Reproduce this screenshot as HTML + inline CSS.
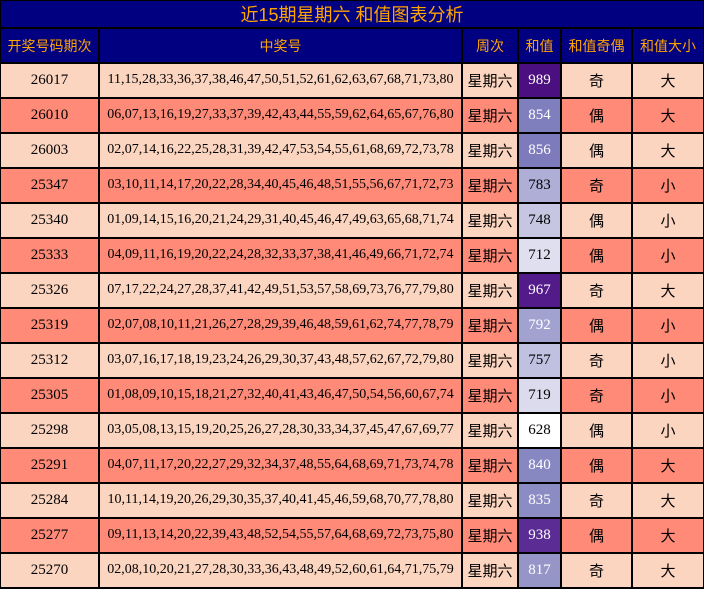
<!DOCTYPE html>
<html><head><meta charset="utf-8"><style>
body{margin:0;width:704px;height:589px;background:#000;position:relative;overflow:hidden;font-family:"Liberation Serif","Noto Sans CJK SC",serif;}
.c{position:absolute;display:flex;align-items:center;justify-content:center;box-sizing:border-box;white-space:nowrap;}
.t{background:#000080;color:#ffa500;font-family:"Liberation Sans","Noto Sans CJK SC",sans-serif;font-size:14px;}
.cj{font-family:"Noto Sans CJK SC",sans-serif;font-size:15px;color:#000;}
.n{font-size:15px;color:#000;padding-bottom:1px;}
.w{font-size:14px;color:#000;padding-bottom:1px;}
</style></head><body>
<div class="c t" style="left:1px;top:1px;width:702px;height:26px;font-size:18px;">近15期星期六 和值图表分析</div>
<div id="h"></div>
<script>
var X=[0,99,462,518,561,632,703];
var H=["开奖号码期次","中奖号","周次","和值","和值奇偶","和值大小"];
var D=[
["26017","11,15,28,33,36,37,38,46,47,50,51,52,61,62,63,67,68,71,73,80",989,"奇","大","#4b0f80"],
["26010","06,07,13,16,19,27,33,37,39,42,43,44,55,59,62,64,65,67,76,80",854,"偶","大","#7f7fbd"],
["26003","02,07,14,16,22,25,28,31,39,42,47,53,54,55,61,68,69,72,73,78",856,"偶","大","#7d7bbb"],
["25347","03,10,11,14,17,20,22,28,34,40,45,46,48,51,55,56,67,71,72,73",783,"奇","小","#aeaed6"],
["25340","01,09,14,15,16,20,21,24,29,31,40,45,46,47,49,63,65,68,71,74",748,"偶","小","#c6c6e3"],
["25333","04,09,11,16,19,20,22,24,28,32,33,37,38,41,46,49,66,71,72,74",712,"偶","小","#dfdfef"],
["25326","07,17,22,24,27,28,37,41,42,49,51,53,57,58,69,73,76,77,79,80",967,"奇","大","#531a8a"],
["25319","02,07,08,10,11,21,26,27,28,29,39,46,48,59,61,62,74,77,78,79",792,"偶","小","#a2a2d0"],
["25312","03,07,16,17,18,19,23,24,26,29,30,37,43,48,57,62,67,72,79,80",757,"奇","小","#c0c0e0"],
["25305","01,08,09,10,15,18,21,27,32,40,41,43,46,47,50,54,56,60,67,74",719,"奇","小","#dbdbed"],
["25298","03,05,08,13,15,19,20,25,26,27,28,30,33,34,37,45,47,67,69,77",628,"偶","小","#ffffff"],
["25291","04,07,11,17,20,22,27,29,32,34,37,48,55,64,68,69,71,73,74,78",840,"偶","大","#8787c2"],
["25284","10,11,14,19,20,26,29,30,35,37,40,41,45,46,59,68,70,77,78,80",835,"奇","大","#8c8cc4"],
["25277","09,11,13,14,20,22,39,43,48,52,54,55,57,64,68,69,72,73,75,80",938,"偶","大","#5b2d94"],
["25270","02,08,10,20,21,27,28,30,33,36,43,48,49,52,60,61,64,71,75,79",817,"奇","大","#9595c8"]];
var s="";
function cell(i,y,h,bg,cls,txt,col){var l=X[i]+1,w=X[i+1]-X[i]-2;if(i==0){l=1;w=97;}if(i==5)w=70;
s+='<div class="c '+cls+'" style="left:'+l+'px;top:'+y+'px;width:'+w+'px;height:'+h+'px;background:'+bg+';'+(col?'color:'+col+';':'')+'">'+txt+'</div>';}
for(var i=0;i<6;i++)cell(i,29,33,"#000080","t",H[i],null);
for(var r=0;r<15;r++){var y=64+r*35,bg=r%2?"#ff8a78":"#fcd5c0",d=D[r];
cell(0,y,33,bg,"n",d[0]);cell(1,y,33,bg,"w",d[1]);cell(2,y,33,bg,"cj","星期六");
cell(3,y,33,d[5],"n",d[2],d[2]>=790?"#fff":"#000");cell(4,y,33,bg,"cj",d[3]);cell(5,y,33,bg,"cj",d[4]);}
document.getElementById("h").outerHTML=s;
</script>
</body></html>
